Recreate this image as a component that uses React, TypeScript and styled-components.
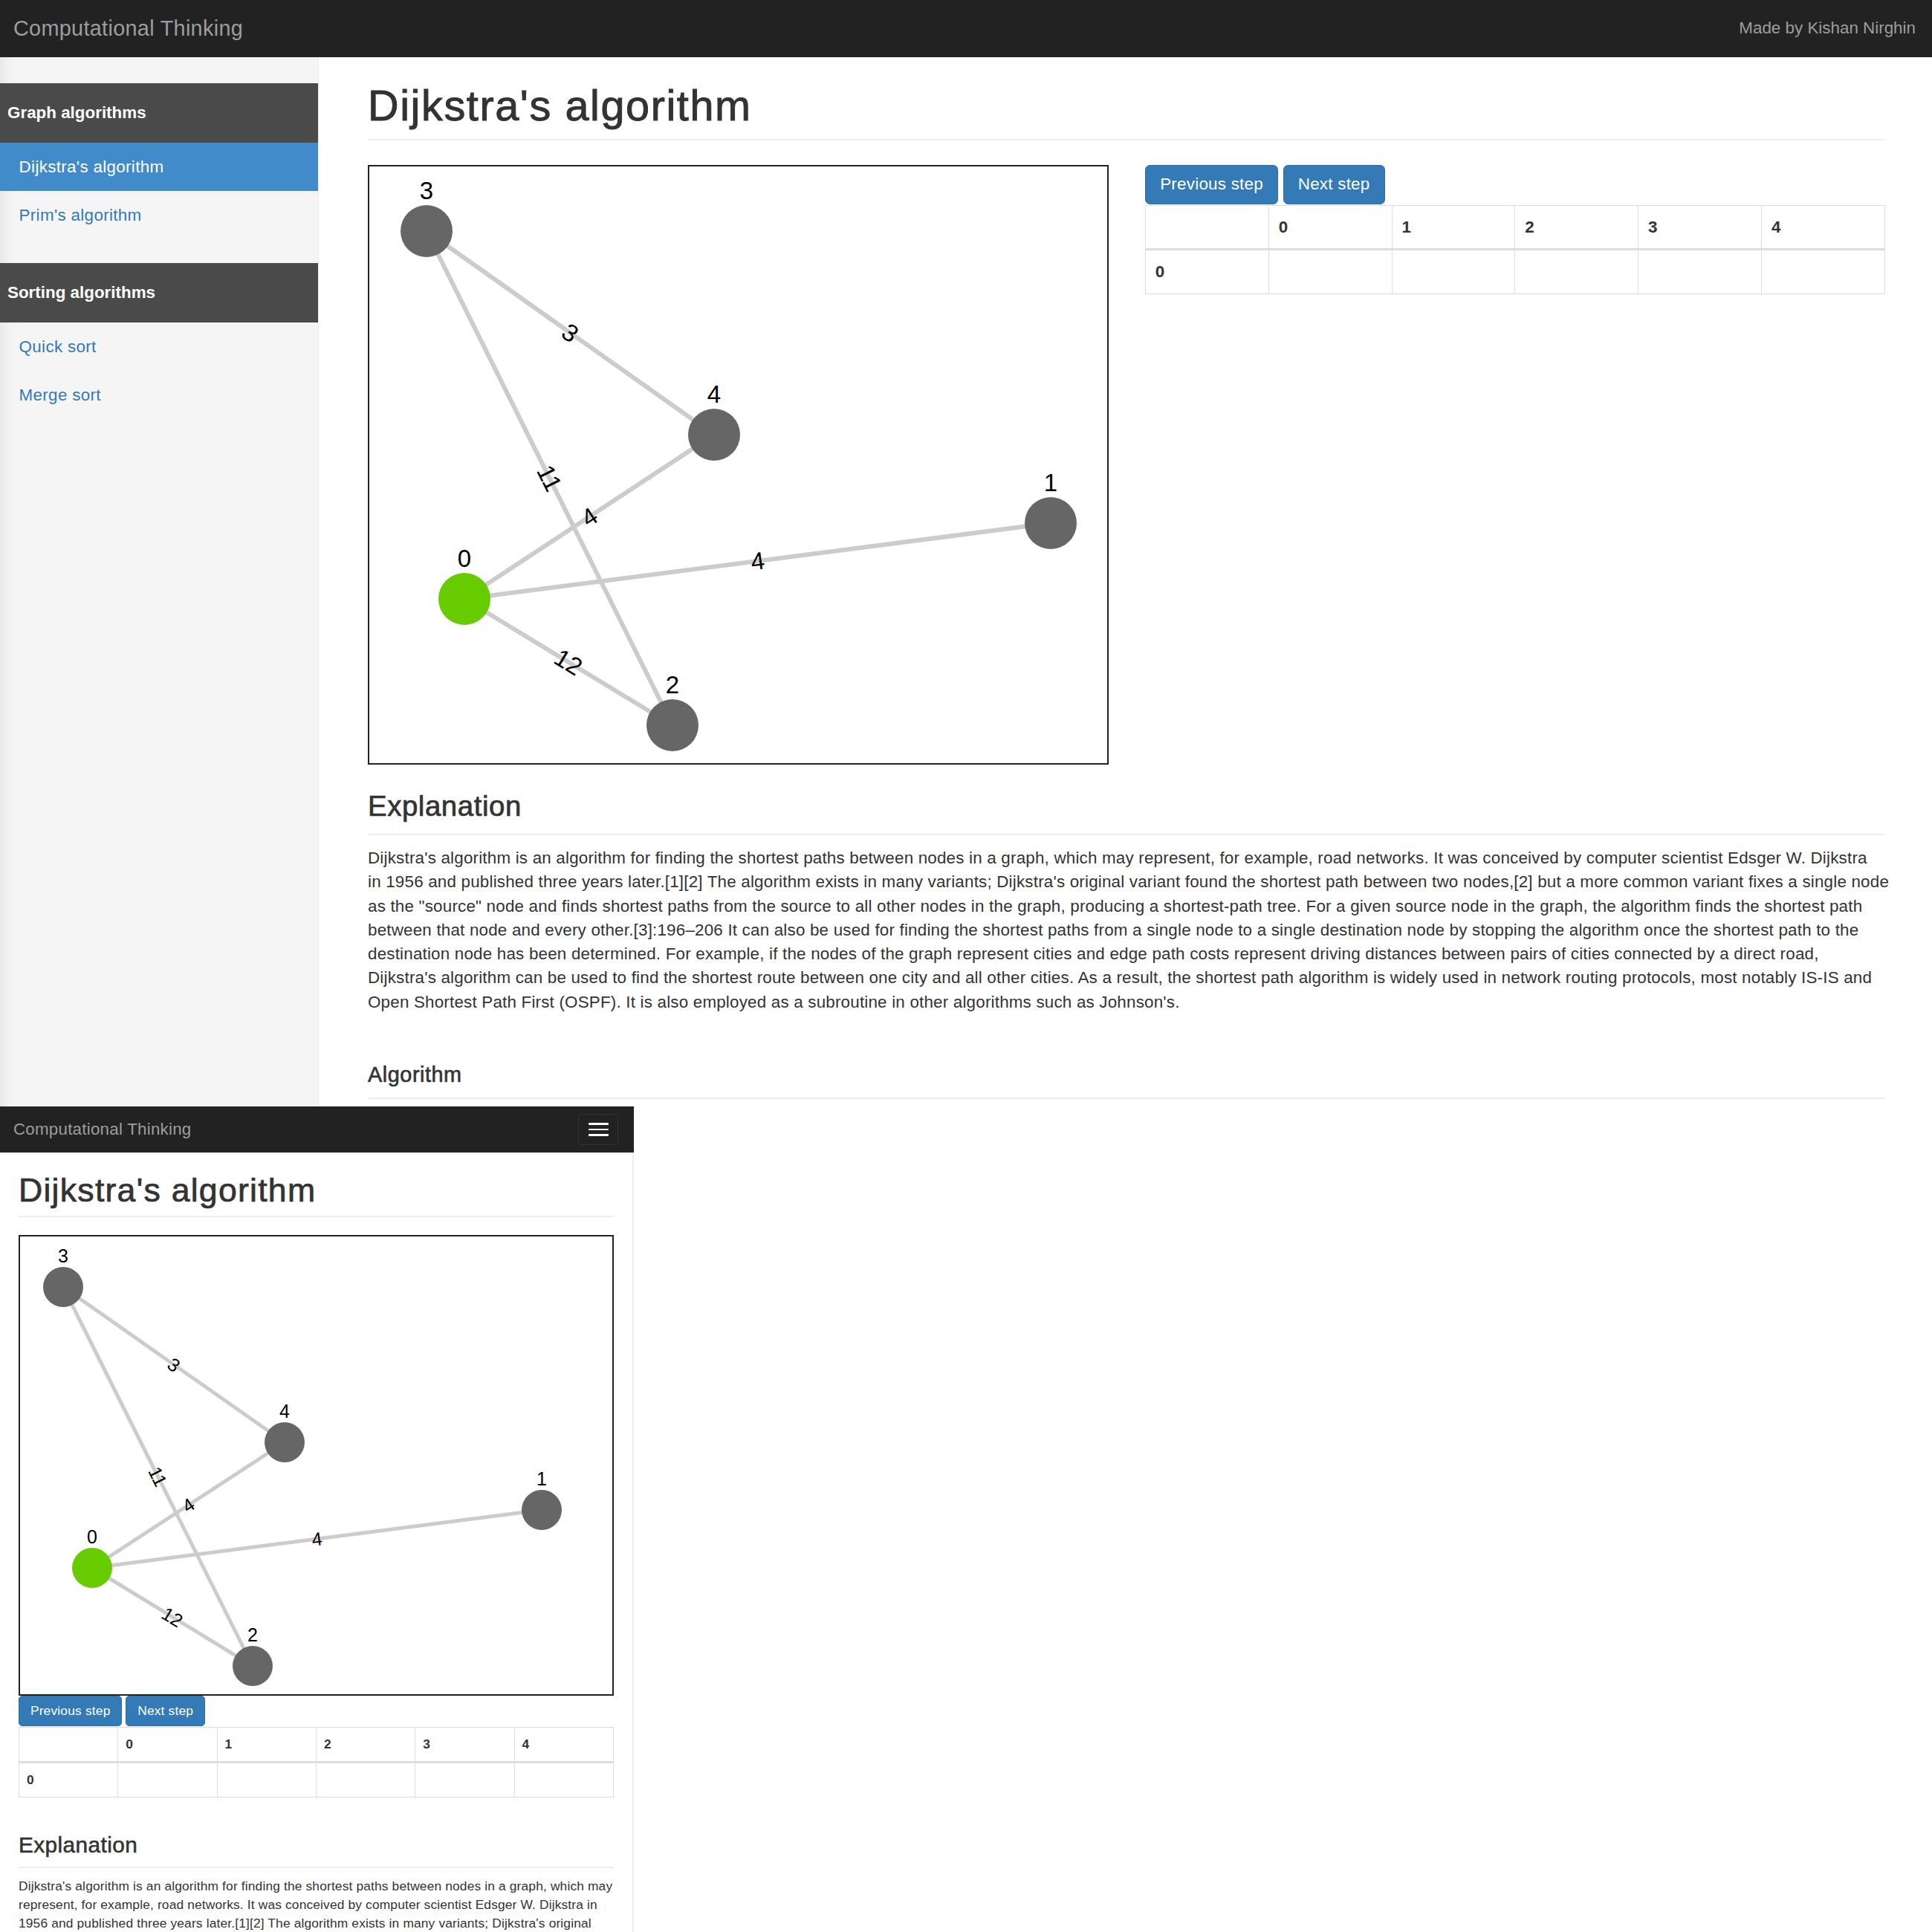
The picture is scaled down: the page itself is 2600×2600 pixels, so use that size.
import React from "react";
import styled, { createGlobalStyle } from "styled-components";

const u = (n: number) => `calc(var(--u) * ${n}px)`;

const GlobalStyle = createGlobalStyle`
  html, body { margin: 0; padding: 0; background: #fff; }
  body { font-family: "Liberation Sans", Arial, Helvetica, sans-serif; color: #333; }
  * { box-sizing: border-box; }
`;

const Canvas = styled.div`
  width: 2600px;
  height: 2600px;
  overflow: hidden;
  background: #fff;
  display: flex;
  flex-direction: column;
  align-items: flex-start;
`;

const Shot = styled.div<{ $u: number; $w: number; $h: number }>`
  --u: ${(p) => p.$u};
  flex: none;
  width: ${(p) => p.$w}px;
  height: ${(p) => p.$h}px;
  overflow: hidden;
  display: flex;
  flex-direction: column;
  font-size: ${u(14)};
  line-height: ${u(20)};
  color: #333;
`;

const Navbar = styled.header<{ $h: number; $pr: number }>`
  flex: none;
  height: ${(p) => p.$h}px;
  background: #222;
  display: flex;
  align-items: center;
  justify-content: space-between;
  padding: 0 ${(p) => p.$pr}px 0 18px;
`;

const Brand = styled.span`
  font-size: ${u(18)};
  line-height: 1;
  letter-spacing: ${u(0.2)};
  color: #9d9d9d;
`;

const NavText = styled.span`
  font-size: ${u(14)};
  line-height: 1;
  color: #9d9d9d;
`;

const Toggle = styled.button`
  width: 54px;
  height: 42px;
  border: 1px solid #333;
  border-radius: 5px;
  background: transparent;
  padding: 0;
  display: flex;
  flex-direction: column;
  align-items: center;
  justify-content: center;
  gap: 5px;
`;

const IconBar = styled.span`
  display: block;
  width: 27px;
  height: 2.5px;
  border-radius: 1px;
  background: #fff;
`;

/* ---------- desktop frame ---------- */

const DesktopBody = styled.div`
  flex: 1;
  min-height: 0;
  display: flex;
`;

const Sidebar = styled.nav`
  flex: none;
  width: 429px;
  padding-top: 35px;
  background: linear-gradient(to right, #e9e9e9 0px, #f3f3f3 14px, #f5f5f5 26px);
  border-right: 1px solid #eee;
  display: flex;
  flex-direction: column;
`;

const NavGroup = styled.ul`
  list-style: none;
  margin: 0 0 ${u(20)} 0;
  padding: 0;
  display: flex;
  flex-direction: column;
`;

const NavHeader = styled.li`
  height: 80px;
  display: flex;
  align-items: center;
  padding-left: 10px;
  background: #4a4a4a;
  color: #fff;
  font-weight: bold;
  font-size: ${u(14)};
`;

const NavItem = styled.li<{ $active?: boolean }>`
  height: 65px;
  display: flex;
  align-items: center;
  padding-left: 25.6px;
  font-size: ${u(14)};
  letter-spacing: ${u(0.2)};
  color: ${(p) => (p.$active ? "#fff" : "#337ab7")};
  background: ${(p) => (p.$active ? "#428bca" : "transparent")};
`;

const Main = styled.main`
  flex: 1;
  min-width: 0;
  padding: 34px 63px 0 66px;
  display: flex;
  flex-direction: column;
`;

const MobileMain = styled.main`
  flex: 1;
  min-height: 0;
  padding: 25.7px 25px 0 25px;
  border-right: 2px solid #eee;
  display: flex;
  flex-direction: column;
`;

const PageTitle = styled.h1<{ $mb: number }>`
  margin: 0 0 ${(p) => p.$mb}px 0;
  padding-bottom: ${u(8)};
  border-bottom: 2px solid #eee;
  font-size: ${u(36)};
  font-weight: 500;
  line-height: 1.1;
  letter-spacing: ${u(1)};
  -webkit-text-stroke: ${u(0.6)} #333;
  color: #333;
`;

const SectionTitle = styled.h3<{ $mt: number; $mb: number }>`
  margin: ${(p) => p.$mt}px 0 ${(p) => p.$mb}px 0;
  padding-bottom: ${u(10)};
  border-bottom: 2px solid #eee;
  font-size: ${u(24)};
  font-weight: 500;
  line-height: 1.1;
  letter-spacing: ${u(0.35)};
  -webkit-text-stroke: ${u(0.45)} #333;
  color: #333;
`;

const SubTitle = styled.h4<{ $mt: number }>`
  margin: ${(p) => p.$mt}px 0 0 0;
  padding-bottom: ${u(9)};
  border-bottom: 2px solid #eee;
  font-size: ${u(18)};
  font-weight: 500;
  line-height: 1.1;
  letter-spacing: ${u(0.35)};
  -webkit-text-stroke: ${u(0.4)} #333;
  color: #333;
`;

const ContentRow = styled.div`
  display: grid;
  grid-template-columns: 1fr 1fr;
  column-gap: 49px;
  align-items: start;
`;

const GraphBox = styled.div<{ $h: number }>`
  width: 100%;
  height: ${(p) => p.$h}px;
  border: 2px solid #222;
  background: #fff;
  svg {
    display: block;
  }
`;

const StepPanel = styled.div`
  display: flex;
  flex-direction: column;
`;

const ButtonRow = styled.div`
  display: flex;
  gap: ${u(4)};
`;

const StepButton = styled.button`
  font-family: inherit;
  font-size: ${u(14)};
  line-height: ${u(20)};
  letter-spacing: ${u(0.15)};
  padding: ${u(6)} ${u(12)};
  border: ${u(1)} solid #2e6da4;
  border-radius: ${u(4)};
  background: #337ab7;
  color: #fff;
  white-space: nowrap;
`;

const Matrix = styled.table`
  width: 100%;
  border-collapse: collapse;
  table-layout: fixed;
  margin-top: 1px;
`;

const Cell = styled.th<{ $head?: boolean }>`
  text-align: left;
  vertical-align: middle;
  padding: ${u(8)};
  line-height: ${u(20)};
  font-size: ${u(14)};
  font-weight: bold;
  color: #333;
  border: 1px solid #ddd;
  border-bottom: ${(p) => (p.$head ? "3px" : "1px")} solid #ddd;
`;

const Para = styled.p`
  margin: 0;
  font-size: ${u(14)};
  line-height: ${u(20.2)};
  letter-spacing: ${u(0.12)};
  color: #333;
`;

const ParaLine = styled.span<{ $wrap?: boolean }>`
  display: block;
  white-space: ${(p) => (p.$wrap ? "normal" : "nowrap")};
`;

/* ---------- graph ---------- */

type GNode = { id: number; x: number; y: number; source?: boolean };
type GEdge = { a: number; b: number; w: number };

const EDGES: GEdge[] = [
  { a: 3, b: 4, w: 3 },
  { a: 3, b: 2, w: 11 },
  { a: 0, b: 4, w: 4 },
  { a: 0, b: 1, w: 4 },
  { a: 0, b: 2, w: 12 },
];

const DESKTOP_NODES: GNode[] = [
  { id: 0, x: 128, y: 582, source: true },
  { id: 1, x: 917, y: 480 },
  { id: 2, x: 408, y: 752 },
  { id: 3, x: 77, y: 87 },
  { id: 4, x: 464, y: 361 },
];

const MOBILE_NODES: GNode[] = [
  { id: 0, x: 97, y: 446, source: true },
  { id: 1, x: 702, y: 368 },
  { id: 2, x: 313, y: 578 },
  { id: 3, x: 58, y: 68 },
  { id: 4, x: 356, y: 277 },
];

type GraphProps = {
  nodes: GNode[];
  width: number;
  height: number;
  r: number;
  labelSize: number;
  edgeSize: number;
  stroke: number;
  gap: number;
};

function Graph({ nodes, width, height, r, labelSize, edgeSize, stroke, gap }: GraphProps) {
  const pos: Record<number, GNode> = {};
  nodes.forEach((n) => (pos[n.id] = n));
  return (
    <svg width={width} height={height} viewBox={`0 0 ${width} ${height}`}>
      {EDGES.map((e) => (
        <line
          key={`l${e.a}-${e.b}`}
          x1={pos[e.a].x}
          y1={pos[e.a].y}
          x2={pos[e.b].x}
          y2={pos[e.b].y}
          stroke="#ccc"
          strokeWidth={stroke}
        />
      ))}
      {EDGES.map((e) => {
        const A = pos[e.a];
        const B = pos[e.b];
        const mx = (A.x + B.x) / 2;
        const my = (A.y + B.y) / 2;
        const ang = (Math.atan2(B.y - A.y, B.x - A.x) * 180) / Math.PI;
        return (
          <text
            key={`t${e.a}-${e.b}`}
            transform={`translate(${mx} ${my}) rotate(${ang})`}
            textAnchor="middle"
            dominantBaseline="central"
            fontSize={edgeSize}
            fontFamily="Liberation Sans, Arial, sans-serif"
            fill="#000"
          >
            {e.w}
          </text>
        );
      })}
      {nodes.map((n) => (
        <circle key={`c${n.id}`} cx={n.x} cy={n.y} r={r} fill={n.source ? "#66cc00" : "#666"} />
      ))}
      {nodes.map((n) => (
        <text
          key={`n${n.id}`}
          x={n.x}
          y={n.y - r - gap}
          textAnchor="middle"
          fontSize={labelSize}
          fontFamily="Liberation Sans, Arial, sans-serif"
          fill="#000"
        >
          {n.id}
        </text>
      ))}
    </svg>
  );
}

function StepControls() {
  const cols = [0, 1, 2, 3, 4];
  return (
    <StepPanel>
      <ButtonRow>
        <StepButton>Previous step</StepButton>
        <StepButton>Next step</StepButton>
      </ButtonRow>
      <Matrix>
        <thead>
          <tr>
            <Cell $head />
            {cols.map((c) => (
              <Cell $head key={c}>
                {c}
              </Cell>
            ))}
          </tr>
        </thead>
        <tbody>
          <tr>
            <Cell>0</Cell>
            {cols.map((c) => (
              <Cell as="td" key={c} />
            ))}
          </tr>
        </tbody>
      </Matrix>
    </StepPanel>
  );
}

const DESKTOP_LINES = [
  "Dijkstra's algorithm is an algorithm for finding the shortest paths between nodes in a graph, which may represent, for example, road networks. It was conceived by computer scientist Edsger W. Dijkstra",
  "in 1956 and published three years later.[1][2] The algorithm exists in many variants; Dijkstra's original variant found the shortest path between two nodes,[2] but a more common variant fixes a single node",
  "as the \"source\" node and finds shortest paths from the source to all other nodes in the graph, producing a shortest-path tree. For a given source node in the graph, the algorithm finds the shortest path",
  "between that node and every other.[3]:196–206 It can also be used for finding the shortest paths from a single node to a single destination node by stopping the algorithm once the shortest path to the",
  "destination node has been determined. For example, if the nodes of the graph represent cities and edge path costs represent driving distances between pairs of cities connected by a direct road,",
  "Dijkstra's algorithm can be used to find the shortest route between one city and all other cities. As a result, the shortest path algorithm is widely used in network routing protocols, most notably IS-IS and",
  "Open Shortest Path First (OSPF). It is also employed as a subroutine in other algorithms such as Johnson's.",
];

const MOBILE_LINES = [
  "Dijkstra's algorithm is an algorithm for finding the shortest paths between nodes in a graph, which may",
  "represent, for example, road networks. It was conceived by computer scientist Edsger W. Dijkstra in",
  "1956 and published three years later.[1][2] The algorithm exists in many variants; Dijkstra's original",
];

const MOBILE_REST =
  "variant found the shortest path between two nodes,[2] but a more common variant fixes a single node as the \"source\" node and finds shortest paths from the source to all other nodes in the graph, producing a shortest-path tree.";

export default function App() {
  return (
    <>
      <GlobalStyle />
      <Canvas>
        <Shot $u={1.6} $w={2600} $h={1489}>
          <Navbar $h={77} $pr={22}>
            <Brand>Computational Thinking</Brand>
            <NavText>Made by Kishan Nirghin</NavText>
          </Navbar>
          <DesktopBody>
            <Sidebar>
              <NavGroup>
                <NavHeader>Graph algorithms</NavHeader>
                <NavItem $active>Dijkstra's algorithm</NavItem>
                <NavItem>Prim's algorithm</NavItem>
              </NavGroup>
              <NavGroup>
                <NavHeader>Sorting algorithms</NavHeader>
                <NavItem>Quick sort</NavItem>
                <NavItem>Merge sort</NavItem>
              </NavGroup>
            </Sidebar>
            <Main>
              <PageTitle $mb={32.5}>Dijkstra's algorithm</PageTitle>
              <ContentRow>
                <GraphBox $h={807}>
                  <Graph
                    nodes={DESKTOP_NODES}
                    width={993}
                    height={803}
                    r={35}
                    labelSize={33}
                    edgeSize={33}
                    stroke={6}
                    gap={8}
                  />
                </GraphBox>
                <StepControls />
              </ContentRow>
              <SectionTitle $mt={35} $mb={15}>
                Explanation
              </SectionTitle>
              <Para>
                {DESKTOP_LINES.map((l, i) => (
                  <ParaLine key={i}>{l}</ParaLine>
                ))}
              </Para>
              <SubTitle $mt={66}>Algorithm</SubTitle>
            </Main>
          </DesktopBody>
        </Shot>
        <Shot $u={1.24} $w={853} $h={1111}>
          <Navbar $h={62} $pr={21}>
            <Brand>Computational Thinking</Brand>
            <Toggle aria-label="Toggle navigation">
              <IconBar />
              <IconBar />
              <IconBar />
            </Toggle>
          </Navbar>
          <MobileMain>
            <PageTitle $mb={24}>Dijkstra's algorithm</PageTitle>
            <GraphBox $h={620}>
              <Graph
                nodes={MOBILE_NODES}
                width={797}
                height={616}
                r={27}
                labelSize={25}
                edgeSize={25}
                stroke={5}
                gap={6}
              />
            </GraphBox>
            <StepControls />
            <SectionTitle $mt={48} $mb={12}>
              Explanation
            </SectionTitle>
            <Para>
              {MOBILE_LINES.map((l, i) => (
                <ParaLine key={i}>{l}</ParaLine>
              ))}
              <ParaLine $wrap>{MOBILE_REST}</ParaLine>
            </Para>
          </MobileMain>
        </Shot>
      </Canvas>
    </>
  );
}
